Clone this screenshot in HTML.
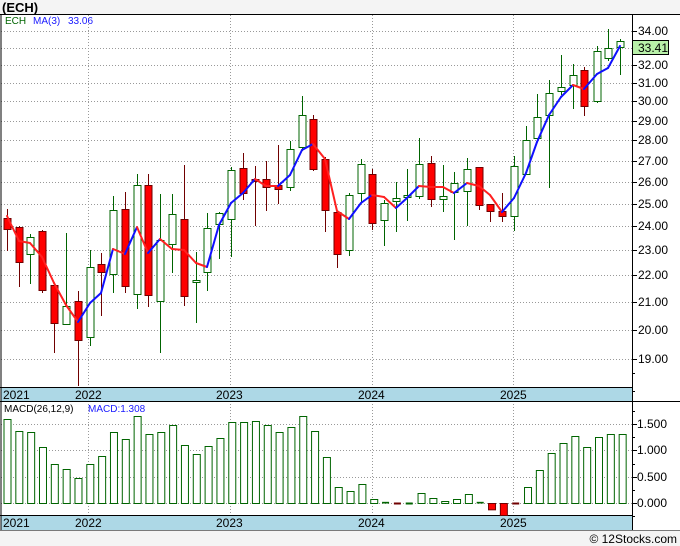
<!DOCTYPE html>
<html><head><meta charset="utf-8"><style>
html,body{margin:0;padding:0;background:#f4f4f4;}
svg{display:block;font-family:"Liberation Sans","DejaVu Sans",sans-serif;}
</style></head><body>
<svg width="680" height="546" viewBox="0 0 680 546" xmlns="http://www.w3.org/2000/svg">
<rect x="0" y="0" width="680" height="546" fill="#f4f4f4"/>
<text x="2" y="12" font-size="13" font-weight="bold" fill="#000">(ECH)</text>
<rect x="0" y="14" width="680" height="516" fill="#fff"/>
<!-- grid -->
<g stroke="#999" stroke-width="1" stroke-dasharray="1,2">
<path d="M1 31.5H632M1 48.5H632M1 65.5H632M1 83.5H632M1 101.5H632M1 121.5H632M1 140.5H632M1 161.5H632M1 182.5H632M1 204.5H632M1 226.5H632M1 250.5H632M1 275.5H632M1 302.5H632M1 330.5H632M1 359.5H632"/>
<path d="M88.5 15V387M230.5 15V387M372.5 15V387M513.5 15V387M88.5 401V515M230.5 401V515M372.5 401V515M513.5 401V515"/>
<path d="M1 424.5H632M1 450.5H632M1 477.5H632M1 503.5H632"/>
</g>
<!-- date bands -->
<rect x="1" y="387" width="631" height="14" fill="#add8e6"/>
<rect x="1" y="515" width="631" height="15" fill="#add8e6"/>
<g stroke="#000" stroke-width="1">
<path d="M0 14.5H680M0 387.5H632M0 401.5H680M0 515.5H632M0 530.5H680M632.5 14V530M1 14V530"/>
</g>
<g font-size="12" fill="#000">
<text x="3" y="399">2021</text><text x="75" y="399">2022</text><text x="216" y="399">2023</text><text x="358" y="399">2024</text><text x="500" y="399">2025</text>
<text x="3" y="527">2021</text><text x="75" y="527">2022</text><text x="216" y="527">2023</text><text x="358" y="527">2024</text><text x="500" y="527">2025</text>
</g>
<!-- axis ticks -->
<g stroke="#000">
<path d="M632 31.5h5M632 48.5h5M632 65.5h5M632 83.5h5M632 101.5h5M632 121.5h5M632 140.5h5M632 161.5h5M632 182.5h5M632 204.5h5M632 226.5h5M632 250.5h5M632 275.5h5M632 302.5h5M632 330.5h5M632 359.5h5"/>
<path d="M632 424.5h5M632 450.5h5M632 477.5h5M632 503.5h5M632 411.5h3M632 437.5h3M632 464.5h3M632 490.5h3M632 516.5h3M632 373.5h3M632 391.5h3"/>
</g>
<g font-size="12" fill="#000">
<text x="638" y="35">34.00</text><text x="638" y="69">32.00</text><text x="638" y="87">31.00</text><text x="638" y="105">30.00</text><text x="638" y="125">29.00</text><text x="638" y="144">28.00</text><text x="638" y="165">27.00</text><text x="638" y="186">26.00</text><text x="638" y="208">25.00</text><text x="638" y="230">24.00</text><text x="638" y="254">23.00</text><text x="638" y="279">22.00</text><text x="638" y="306">21.00</text><text x="638" y="334">20.00</text><text x="638" y="363">19.00</text>
<text x="637" y="428">1.500</text><text x="637" y="454">1.000</text><text x="637" y="481">0.500</text><text x="637" y="507">0.000</text>
</g>
<rect x="632.5" y="40.5" width="36" height="14" fill="#b8f0a8" stroke="#000"/>
<text x="638" y="52" font-size="12" fill="#000">33.41</text>
<!-- legend -->
<g font-size="10">
<text x="5" y="24" fill="#006400">ECH</text><text x="33" y="24" fill="#1a1aff">MA(3)</text><text x="68" y="24" fill="#1a1aff">33.06</text>
<text x="4" y="412" fill="#000">MACD(26,12,9)</text><text x="88" y="412" fill="#1a1aff">MACD:1.308</text>
</g>
<!-- candles -->
<g stroke-width="1" id="c"></g>
<!-- MA line -->
<g fill="none" stroke-width="2" stroke-linejoin="round" stroke-linecap="round" id="ma"></g>
<g id="macd"></g>
<rect x="0" y="530.5" width="680" height="16" fill="#f4f4f4"/>
<text x="677" y="543" font-size="12" fill="#000" text-anchor="end">© 12Stocks.com</text>
</svg>
<script>
var C=[[7,209,251,218,229,'r'],[19,226,287,227,262,'r'],[30,234,284,237,254,'g'],[42,230,293,231,290,'r'],[54,285,353,285,323,'r'],[66,233,325,306,324,'g'],[78,291,386,301,340,'r'],[90,250,346,267,337,'g'],[101,253,316,264,272,'r'],[113,196,293,210,274,'g'],[125,192,293,209,286,'r'],[137,174,309,185,294,'g'],[148,174,307,185,295,'r'],[160,194,353,240,301,'g'],[172,194,273,214,244,'g'],[184,165,306,219,296,'r'],[196,252,323,280,282,'g'],[207,213,291,228,272,'g'],[219,212,259,213,224,'g'],[231,167,257,170,219,'g'],[243,153,200,168,193,'r'],[255,166,226,179,181,'r'],[266,161,211,179,187,'r'],[278,145,204,185,189,'r'],[290,141,191,149,187,'g'],[302,96,151,115,147,'g'],[313,115,171,119,169,'r'],[325,157,232,159,210,'r'],[337,212,268,212,254,'r'],[349,193,256,195,250,'g'],[361,159,203,164,193,'g'],[372,169,230,174,223,'r'],[384,200,246,203,220,'g'],[396,182,232,198,201,'g'],[407,169,221,195,197,'g'],[419,138,199,164,196,'g'],[431,156,207,163,199,'r'],[443,165,212,196,199,'g'],[454,172,240,183,192,'g'],[467,158,226,169,191,'g'],[479,167,210,167,205,'r'],[490,204,222,204,211,'r'],[502,193,222,211,216,'r'],[514,156,231,166,216,'g'],[526,126,174,140,174,'g'],[537,94,138,117,138,'g'],[549,80,188,93,115,'g'],[561,55,95,87,91,'g'],[573,64,109,75,85,'g'],[584,67,116,70,106,'r'],[597,46,103,51,101,'g'],[608,29,61,48,58,'g'],[620,39,75,41,47,'g']];
var s='';
C.forEach(function(c){var col=c[5]=='g'?'#006400':'#700000';var fill=c[5]=='g'?'#fff':'#ff0000';
s+='<line x1="'+(c[0]+.5)+'" y1="'+c[1]+'" x2="'+(c[0]+.5)+'" y2="'+c[2]+'" stroke="'+col+'"/>';
s+='<rect x="'+(c[0]-3)+'" y="'+(c[3]+.5)+'" width="7" height="'+Math.max(1,c[4]-c[3])+'" fill="'+fill+'" stroke="'+col+'"/>';});
document.getElementById('c').innerHTML=s;
var M=[[7,216],[19,241],[30,243],[42,257],[54,283],[66,305],[78,322],[90,303],[101,293],[113,249],[125,254],[137,227],[148,253],[160,239],[172,249],[184,250],[196,263],[207,267],[219,225],[231,203],[243,193],[255,179],[266,186],[278,186],[290,175],[302,150],[313,144],[325,159],[337,211],[349,219],[361,203],[372,195],[384,197],[396,208],[407,198],[419,186],[431,187],[443,187],[454,193],[467,183],[479,186],[490,195],[502,212],[514,198],[526,173],[537,142],[549,115],[561,97],[573,85],[584,89],[597,74],[608,68],[620,46]];
s='';for(var i=1;i<M.length;i++){var col=M[i][1]<M[i-1][1]?'#1010ff':'#ff2020';
s+='<line x1="'+M[i-1][0]+'" y1="'+M[i-1][1]+'" x2="'+M[i][0]+'" y2="'+M[i][1]+'" stroke="'+col+'"/>';}
document.getElementById('ma').innerHTML=s;
var T=[148,184,187,232,283,298,325,283,259,187,208,139,193,187,166,224,253,229,205,157,157,154,166,187,172,139,184,262,352,364,343,388,397,400,400,370,385,394,388,373,397,418,435,400,352,300,250,220,199,232,202,193,193];
s='';T.forEach(function(t,i){var x=7+11.83*i;var y=370+t/3;
if(i==41||i==42){s+='<rect x="'+(x-3.5)+'" y="503.5" width="7" height="'+(y-503)+'" fill="#ff0000" stroke="#700000"/>';}
else if(t>=400){s+='<line x1="'+(x-3.5)+'" y1="503.5" x2="'+(x+3.5)+'" y2="503.5" stroke="'+(i==33||i==43?'#700000':'#006400')+'" stroke-width="2"/>';}
else if(t>=397){s+='<rect x="'+(x-3.5)+'" y="'+(y-.5)+'" width="7" height="'+(504-y)+'" fill="#006400"/>';}
else s+='<rect x="'+(x-3)+'" y="'+(Math.round(y)+.5)+'" width="7" height="'+(503-Math.round(y))+'" fill="#fff" stroke="#006400"/>';});
document.getElementById('macd').innerHTML=s;
</script>
</body></html>
